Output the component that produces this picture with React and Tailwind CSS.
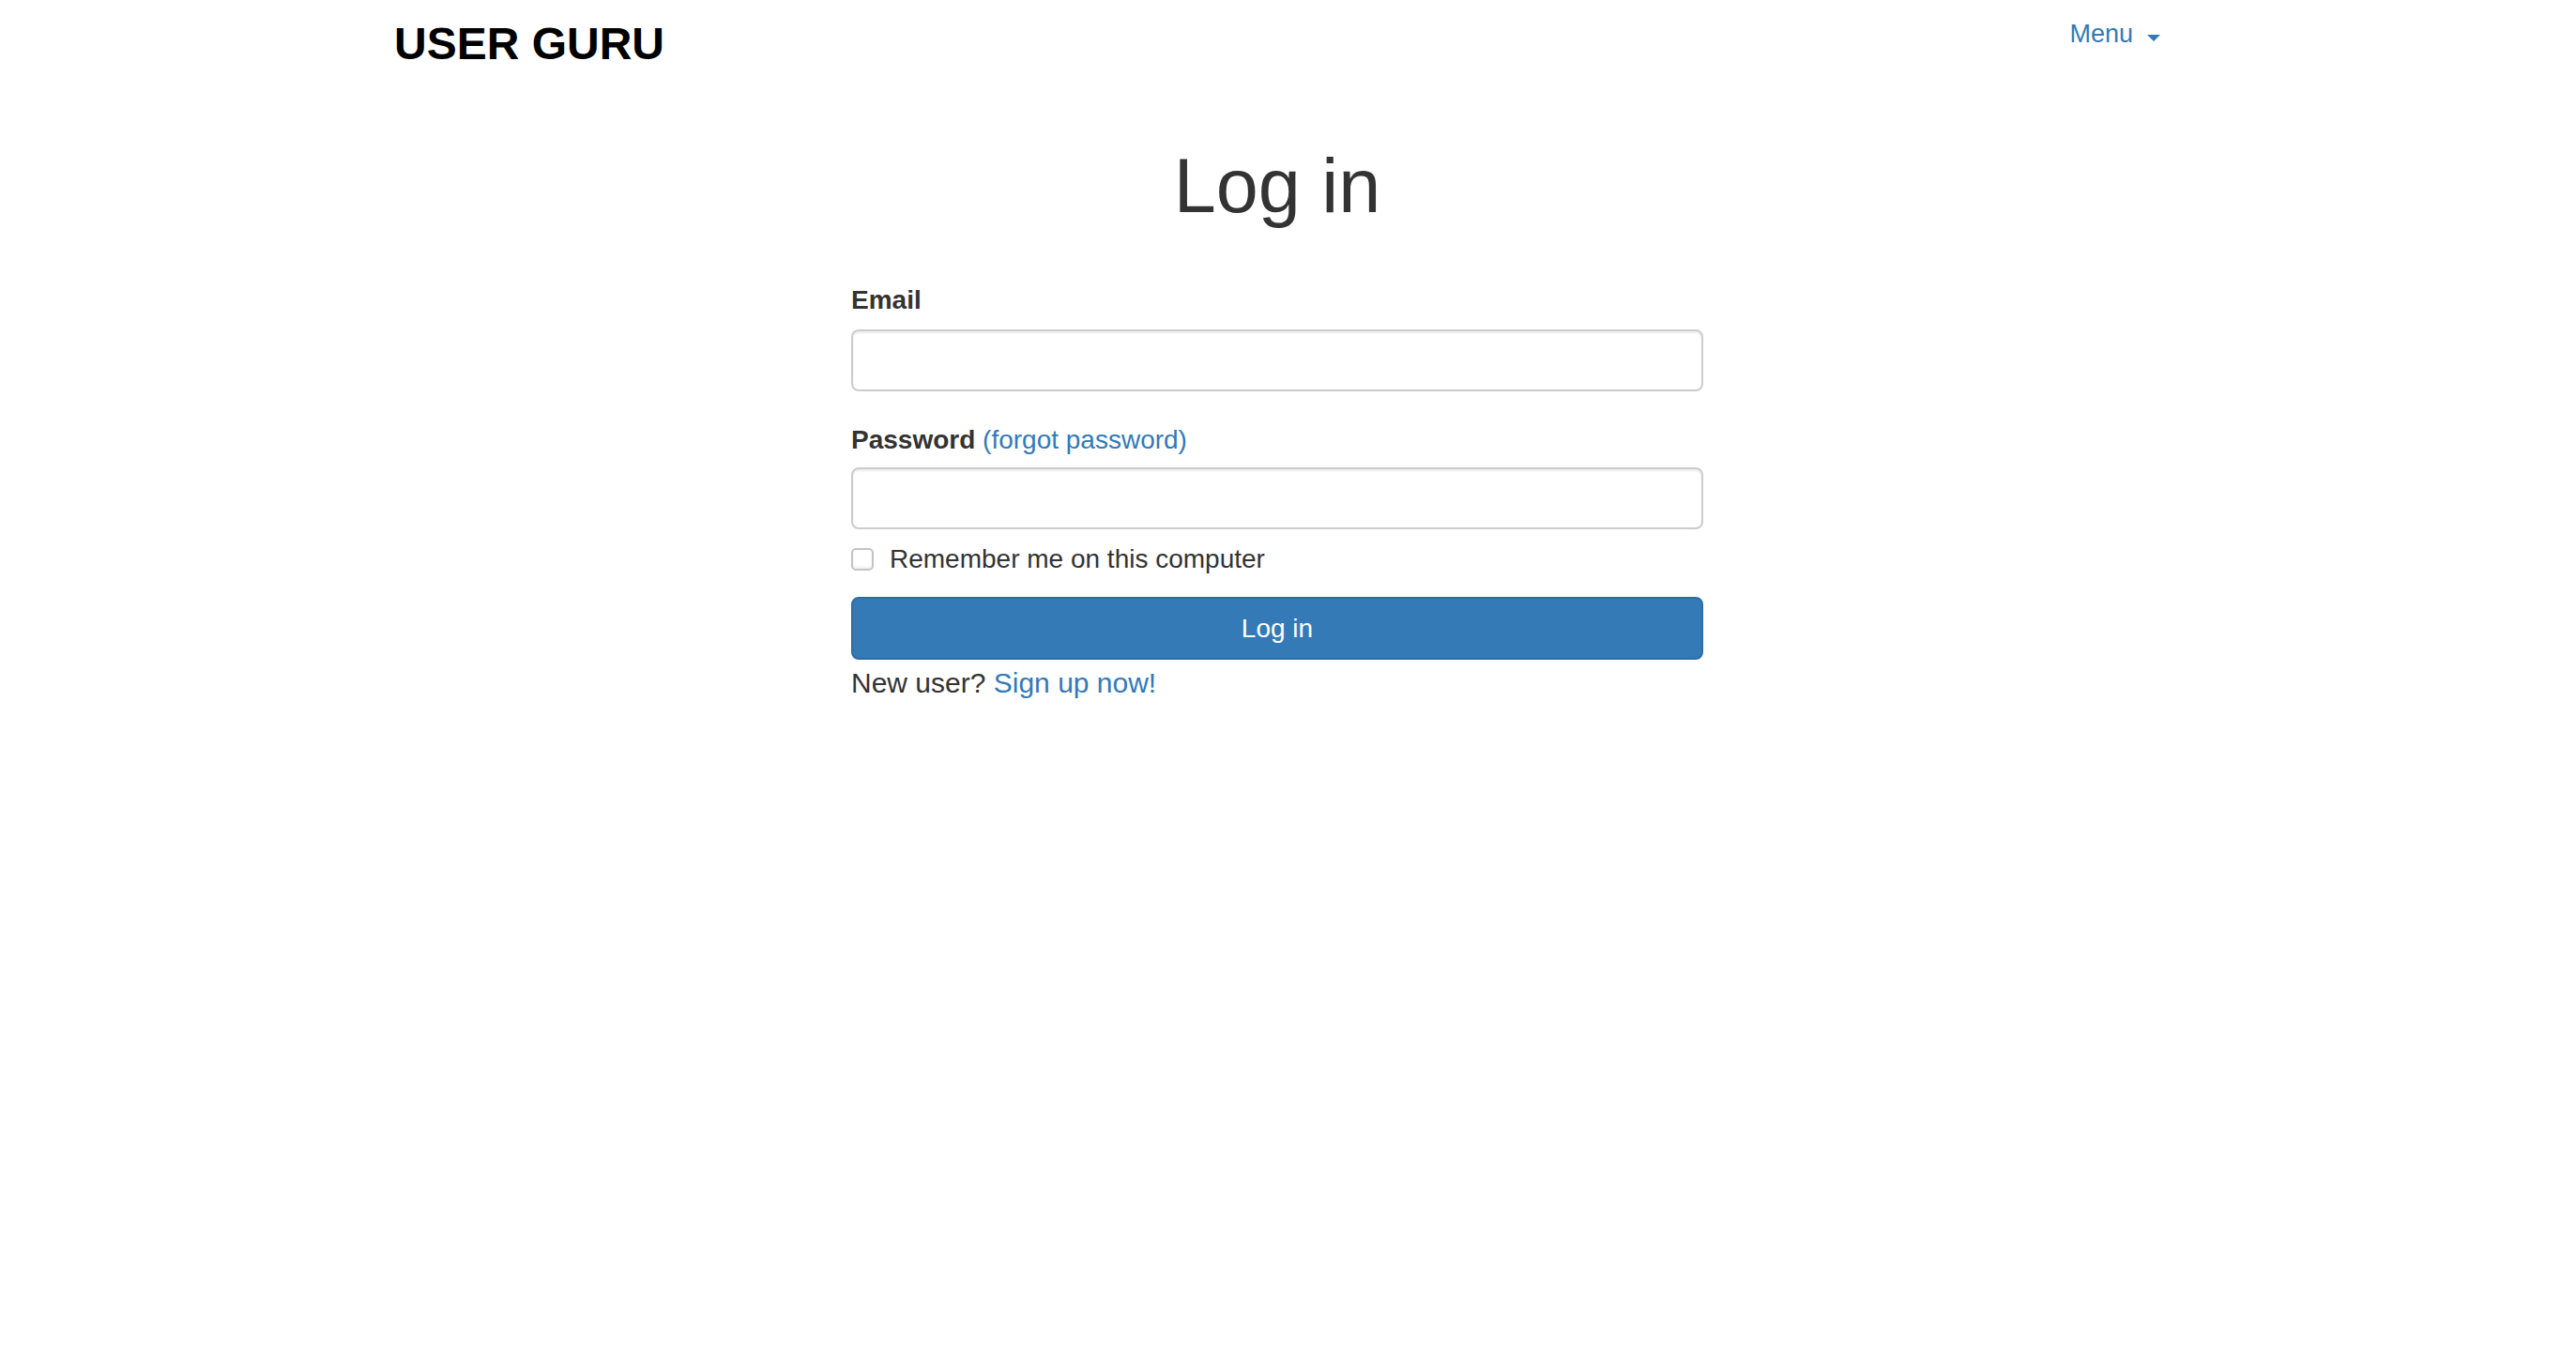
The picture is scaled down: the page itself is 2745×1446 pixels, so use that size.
import React, { useState } from 'react';

function Caret() {
  return (
    <span className="mt-[8px] inline-block h-0 w-0 border-x-[7px] border-t-[7px] border-x-transparent border-t-[#337ab7]" />
  );
}

function Field({ label, extra, type, className }) {
  return (
    <div className={className}>
      <label className="block text-[28px] leading-[28px] text-[#333]">
        <span className="font-bold">{label}</span>
        {extra && (
          <a href="#" className="text-[#337ab7]">
            {' '}
            {extra}
          </a>
        )}
      </label>
      <input
        type={type}
        className="mt-[17px] block h-[66px] w-full rounded-[8px] border-2 border-[#ccc] bg-white px-[24px] text-[28px] text-[#555] shadow-[inset_0_2px_2px_rgba(0,0,0,0.075)] outline-none"
      />
    </div>
  );
}

export default function App() {
  const [remember, setRemember] = useState(false);

  return (
    <div className="min-h-screen bg-white pr-[23px] font-['Liberation_Sans',Arial,Helvetica,sans-serif]">
      {/* Navbar */}
      <header className="mx-auto flex w-[1882px] items-start justify-between">
        <a href="#" className="pt-[23px] text-[48px] font-bold leading-[47px] text-black">
          USER GURU
        </a>
        <button className="flex items-center gap-[15px] pt-[23px] text-[27px] leading-[27px] text-[#337ab7]">
          Menu
          <Caret />
        </button>
      </header>

      {/* Login form */}
      <main className="mx-auto w-[908px]">
        <h1 className="mt-[87px] text-center text-[81px] font-normal leading-[82px] text-[#333]">Log in</h1>

        <form onSubmit={(e) => e.preventDefault()}>
          <Field label="Email" type="email" className="mt-[67px]" />
          <Field label="Password" extra="(forgot password)" type="password" className="mt-[38px] [&_input]:mt-[15px]" />

          <label className="mt-[18px] flex cursor-pointer items-center gap-[17px] text-[28px] leading-[28px] text-[#333]">
            <span
              onClick={() => setRemember(!remember)}
              className="flex h-[24px] w-[24px] items-center justify-center rounded-[5px] border-2 border-[#c4c4c4] bg-white text-[18px] leading-none text-[#333] shadow-[inset_0_-2px_3px_rgba(0,0,0,0.06)]"
            >
              {remember ? '✓' : ''}
            </span>
            Remember me on this computer
          </label>

          <button
            type="submit"
            className="mt-[26px] flex h-[67px] w-full items-center justify-center rounded-[8px] border-2 border-[#2e6da4] bg-[#337ab7] text-[28px] leading-[28px] text-white"
          >
            Log in
          </button>
        </form>

        <p className="mt-[10px] text-[30px] leading-[30px] text-[#333]">
          New user?{' '}
          <a href="#" className="text-[#337ab7]">
            Sign up now!
          </a>
        </p>
      </main>
    </div>
  );
}
